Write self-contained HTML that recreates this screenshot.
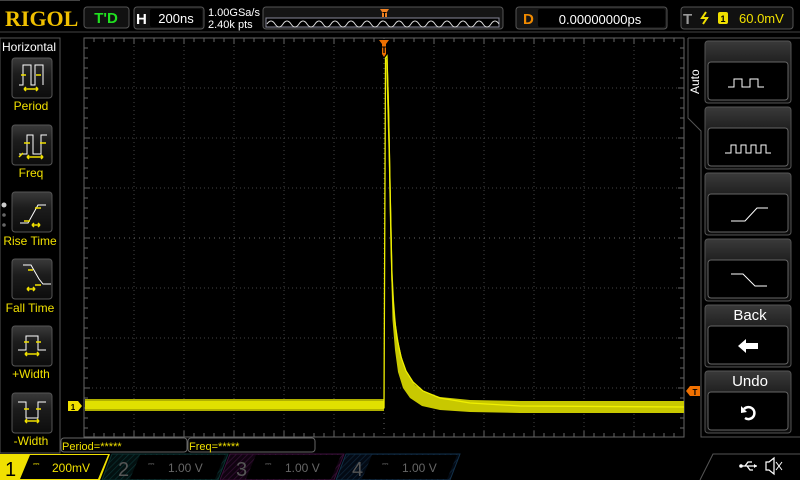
<!DOCTYPE html>
<html><head><style>
html,body{margin:0;padding:0;background:#000;width:800px;height:480px;overflow:hidden;font-family:"Liberation Sans",sans-serif}
svg{display:block}
</style></head><body>
<svg width="800" height="480" viewBox="0 0 800 480" xmlns="http://www.w3.org/2000/svg" font-family="Liberation Sans, sans-serif">
<defs>
<linearGradient id="btn" x1="0" y1="0" x2="0" y2="1"><stop offset="0" stop-color="#3a3a3a"/><stop offset="0.4" stop-color="#1c1c1c"/><stop offset="1" stop-color="#0c0c0c"/></linearGradient>
<pattern id="hatchG" width="4" height="4" patternUnits="userSpaceOnUse" patternTransform="rotate(45)"><rect width="4" height="4" fill="#031010"/><line x1="0" y1="0" x2="0" y2="4" stroke="#0b3030" stroke-width="1.5"/></pattern>
<pattern id="hatchM" width="4" height="4" patternUnits="userSpaceOnUse" patternTransform="rotate(45)"><rect width="4" height="4" fill="#100310"/><line x1="0" y1="0" x2="0" y2="4" stroke="#341034" stroke-width="1.5"/></pattern>
<pattern id="hatchB" width="4" height="4" patternUnits="userSpaceOnUse" patternTransform="rotate(45)"><rect width="4" height="4" fill="#030a14"/><line x1="0" y1="0" x2="0" y2="4" stroke="#0f2438" stroke-width="1.5"/></pattern>
</defs>
<rect width="800" height="480" fill="#000"/>
<line x1="0" y1="32" x2="800" y2="32" stroke="#444" stroke-width="1"/>
<line x1="0" y1="0.5" x2="80" y2="0.5" stroke="#444"/>
<text x="5" y="26" font-family="Liberation Serif, serif" font-weight="bold" font-size="22" fill="#f0c000">RIGOL</text>
<rect x="84" y="7" width="45" height="21" rx="3" fill="#111" stroke="#555"/>
<text x="106" y="23" font-size="15" font-weight="bold" fill="#20e020" text-anchor="middle">T'D</text>
<rect x="134" y="7" width="70" height="22" rx="3" fill="#111" stroke="#555"/>
<rect x="150" y="9" width="52" height="18" rx="2" fill="#000"/>
<text x="136" y="24" font-size="15" font-weight="bold" fill="#fff">H</text>
<text x="176" y="23" font-size="13" fill="#fff" text-anchor="middle">200ns</text>
<text x="208" y="16" font-size="11" fill="#fff">1.00GSa/s</text>
<text x="208" y="28" font-size="11" fill="#fff">2.40k pts</text>
<rect x="263" y="7" width="240" height="22" rx="3" fill="#151515" stroke="#555"/>
<rect x="266" y="18" width="233" height="9" fill="#000" stroke="#889"/>
<path d="M267 24 q4 -6 8 0 t8 0 t8 0 t8 0 t8 0 t8 0 t8 0 t8 0 t8 0 t8 0 t8 0 t8 0 t8 0 t8 0 t8 0 t8 0 t8 0 t8 0 t8 0 t8 0 t8 0 t8 0 t8 0 t8 0 t8 0 t8 0 t8 0 t8 0 t8 0" fill="none" stroke="#ddd" stroke-width="1"/>
<path d="M380 9 h9 l-2 3 v5 h-5 v-5 z" fill="#f08020"/>
<text x="384.5" y="17" font-size="7" font-weight="bold" fill="#000" text-anchor="middle">T</text>
<rect x="516" y="7" width="151" height="22" rx="3" fill="#151515" stroke="#555"/>
<rect x="538" y="9" width="127" height="18" rx="2" fill="#000"/>
<text x="523" y="24" font-size="15" font-weight="bold" fill="#f08a00">D</text>
<text x="600" y="24" font-size="13" fill="#fff" text-anchor="middle">0.00000000ps</text>
<rect x="681" y="7" width="112" height="22" rx="3" fill="#111" stroke="#555"/>
<text x="683" y="24" font-size="15" font-weight="bold" fill="#999">T</text>
<path d="M706 12 l-4 6 h5 l-4 6 M702 18 h6" stroke="#f0e000" stroke-width="2" fill="none"/>
<rect x="718" y="12" width="10" height="12" rx="2" fill="#f0e000"/>
<text x="723" y="22" font-size="9" font-weight="bold" fill="#000" text-anchor="middle">1</text>
<text x="739" y="23" font-size="13" fill="#f0e000">60.0mV</text>

<rect x="0" y="38" width="60" height="415" fill="none" stroke="#555"/>
<text x="2" y="51" font-size="12" fill="#fff">Horizontal</text>
<g fill="url(#btn)" stroke="#555">
<rect x="12" y="58" width="40" height="40" rx="3"/>
<rect x="12" y="125" width="40" height="40" rx="3"/>
<rect x="12" y="192" width="40" height="40" rx="3"/>
<rect x="12" y="259" width="40" height="40" rx="3"/>
<rect x="12" y="326" width="40" height="40" rx="3"/>
<rect x="12" y="393" width="40" height="40" rx="3"/>
</g>
<g fill="none" stroke="#fff" stroke-width="1">
<path d="M19 85 h4 v-20 h8 v20 h4 v-20 h8 v20"/>
<path d="M19 154 h8 v-19 h6 v19 h8 v-19 h6"/>
<path d="M20 223 h8 l10 -18 h8"/>
<path d="M23 265 h8 l8 14 l4 5 h8"/>
<path d="M18 350 h8 v-14 h12 v14 h8"/>
<path d="M18 402 h8 v16 h12 v-16 h8"/>
</g>
<g fill="none" stroke="#f0e000" stroke-width="1.5">
<path d="M21 75 h5 M36 75 h5 M24 89 h14 M24 89 l2 -2 M24 89 l2 2 M38 89 l-2 -2 M38 89 l-2 2"/>
<path d="M24 143 h6 M40 143 h6 M27 157 h16 M27 157 l2 -2 M27 157 l2 2 M43 157 l-2 -2 M43 157 l-2 2 M19 157 l4 -4"/>
<path d="M35 208 h6 M24 221 h6 M32 225 h8 M32 225 l2 -2 M32 225 l2 2 M40 225 l-2 -2 M40 225 l-2 2"/>
<path d="M28 270 h5 M35 285 h6 M27 289 h8 M27 289 l2 -2 M27 289 l2 2 M35 289 l-2 -2 M35 289 l-2 2"/>
<path d="M24 342 h5 M36 342 h5 M25 354 h14 M25 354 l2 -2 M25 354 l2 2 M39 354 l-2 -2 M39 354 l-2 2"/>
<path d="M24 409 h5 M36 409 h5 M25 421 h14 M25 421 l2 -2 M25 421 l2 2 M39 421 l-2 -2 M39 421 l-2 2"/>
</g>
<g font-size="12" fill="#f0e000" text-anchor="middle">
<text x="31" y="110">Period</text>
<text x="31" y="177">Freq</text>
<text x="30" y="245">Rise Time</text>
<text x="30" y="312">Fall Time</text>
<text x="31" y="378">+Width</text>
<text x="31" y="445">-Width</text>
</g>
<circle cx="4" cy="205" r="2.5" fill="#ccc"/><circle cx="4" cy="215" r="1.8" fill="#666"/><circle cx="4" cy="225" r="1.8" fill="#666"/>

<rect x="84" y="38" width="600" height="399" fill="#000" stroke="#666"/>
<g stroke="#444" stroke-dasharray="1 3">
<line x1="134" y1="38" x2="134" y2="437"/><line x1="184" y1="38" x2="184" y2="437"/><line x1="234" y1="38" x2="234" y2="437"/><line x1="284" y1="38" x2="284" y2="437"/><line x1="334" y1="38" x2="334" y2="437"/><line x1="434" y1="38" x2="434" y2="437"/><line x1="484" y1="38" x2="484" y2="437"/><line x1="534" y1="38" x2="534" y2="437"/><line x1="584" y1="38" x2="584" y2="437"/><line x1="634" y1="38" x2="634" y2="437"/>
<line x1="84" y1="88" x2="684" y2="88"/><line x1="84" y1="138" x2="684" y2="138"/><line x1="84" y1="188" x2="684" y2="188"/><line x1="84" y1="288" x2="684" y2="288"/><line x1="84" y1="338" x2="684" y2="338"/><line x1="84" y1="388" x2="684" y2="388"/>
</g>
<g stroke="#666">
<line x1="384" y1="38" x2="384" y2="437" stroke-dasharray="1 4"/>
<line x1="84" y1="238" x2="684" y2="238" stroke-dasharray="1 4"/>
</g>
<g stroke="#666">
<path d="M94 38v4M104 38v4M114 38v4M124 38v4M134 38v6M144 38v4M154 38v4M164 38v4M174 38v4M184 38v6M194 38v4M204 38v4M214 38v4M224 38v4M234 38v6M244 38v4M254 38v4M264 38v4M274 38v4M284 38v6M294 38v4M304 38v4M314 38v4M324 38v4M334 38v6M344 38v4M354 38v4M364 38v4M374 38v4M394 38v4M404 38v4M414 38v4M424 38v4M434 38v6M444 38v4M454 38v4M464 38v4M474 38v4M484 38v6M494 38v4M504 38v4M514 38v4M524 38v4M534 38v6M544 38v4M554 38v4M564 38v4M574 38v4M584 38v6M594 38v4M604 38v4M614 38v4M624 38v4M634 38v6M644 38v4M654 38v4M664 38v4M674 38v4"/>
<path d="M94 437v-4M104 437v-4M114 437v-4M124 437v-4M134 437v-6M144 437v-4M154 437v-4M164 437v-4M174 437v-4M184 437v-6M194 437v-4M204 437v-4M214 437v-4M224 437v-4M234 437v-6M244 437v-4M254 437v-4M264 437v-4M274 437v-4M284 437v-6M294 437v-4M304 437v-4M314 437v-4M324 437v-4M334 437v-6M344 437v-4M354 437v-4M364 437v-4M374 437v-4M394 437v-4M404 437v-4M414 437v-4M424 437v-4M434 437v-6M444 437v-4M454 437v-4M464 437v-4M474 437v-4M484 437v-6M494 437v-4M504 437v-4M514 437v-4M524 437v-4M534 437v-6M544 437v-4M554 437v-4M564 437v-4M574 437v-4M584 437v-6M594 437v-4M604 437v-4M614 437v-4M624 437v-4M634 437v-6M644 437v-4M654 437v-4M664 437v-4M674 437v-4"/>
<path d="M84 48h4M84 58h4M84 68h4M84 78h4M84 88h6M84 98h4M84 108h4M84 118h4M84 128h4M84 138h6M84 148h4M84 158h4M84 168h4M84 178h4M84 188h6M84 198h4M84 208h4M84 218h4M84 228h4M84 238h6M84 248h4M84 258h4M84 268h4M84 278h4M84 288h6M84 298h4M84 308h4M84 318h4M84 328h4M84 338h6M84 348h4M84 358h4M84 368h4M84 378h4M84 388h6M84 398h4M84 408h4M84 418h4M84 428h4"/>
<path d="M684 48h-4M684 58h-4M684 68h-4M684 78h-4M684 88h-6M684 98h-4M684 108h-4M684 118h-4M684 128h-4M684 138h-6M684 148h-4M684 158h-4M684 168h-4M684 178h-4M684 188h-6M684 198h-4M684 208h-4M684 218h-4M684 228h-4M684 238h-6M684 248h-4M684 258h-4M684 268h-4M684 278h-4M684 288h-6M684 298h-4M684 308h-4M684 318h-4M684 328h-4M684 338h-6M684 348h-4M684 358h-4M684 368h-4M684 378h-4M684 388h-6M684 398h-4M684 408h-4M684 418h-4M684 428h-4"/>
</g>

<!-- waveform -->
<rect x="85" y="399" width="299" height="12" fill="#b0b000"/>
<rect x="85" y="401" width="299" height="8" fill="#e0e000"/>
<path d="M386 60 L387.5 56 L389 100 L391 200 L392.5 270 L394 300 L396 325 L399 345 L403 362 L408 375 L415 385 L425 392 L440 397 L470 400 L520 401 L684 401 L684 413 L520 413 L470 412 L440 410 L422 406 L410 398 L403 388 L398 372 L395 350 L392.5 320 L390.5 250 L388.5 150 L386.5 80 Z" fill="#c8c800"/>
<path d="M384 408 L385.5 58 L387 56 L388.5 110 L390.5 210 L392 280 L394 315 L397 338 L401 357 L406 371 L413 382 L423 391 L440 398 L470 403 L520 406 L684 407" fill="none" stroke="#f0f000" stroke-width="1.3"/>
<!-- markers -->
<path d="M68 401 h10 l4 5 l-4 5 h-10 z" fill="#f0e000"/>
<text x="73" y="410" font-size="8" font-weight="bold" fill="#000" text-anchor="middle">1</text>
<path d="M379 40 h10 l-3 4 v10 l-2 3 l-2 -3 v-10 z" fill="#f07000"/>
<text x="384" y="53" font-size="9" font-weight="bold" fill="#000" text-anchor="middle">T</text>
<path d="M686 391 l4 -5 h10 v10 h-10 z" fill="#f07000"/>
<text x="695" y="395" font-size="8" font-weight="bold" fill="#000" text-anchor="middle">T</text>

<path d="M688 38 V118 L701 131 V437 H800" fill="none" stroke="#555"/>
<line x1="688" y1="38" x2="800" y2="38" stroke="#555"/>
<text transform="translate(699,94) rotate(-90)" font-size="12" fill="#fff">Auto</text>
<g fill="url(#btn)" stroke="#555">
<rect x="705" y="41" width="86" height="62" rx="3"/>
<rect x="705" y="107" width="86" height="62" rx="3"/>
<rect x="705" y="173" width="86" height="62" rx="3"/>
<rect x="705" y="239" width="86" height="62" rx="3"/>
<rect x="705" y="305" width="86" height="62" rx="3"/>
<rect x="705" y="371" width="86" height="62" rx="3"/>
</g>
<g fill="#000" stroke="#666">
<rect x="708" y="62" width="80" height="38" rx="3"/>
<rect x="708" y="128" width="80" height="38" rx="3"/>
<rect x="708" y="194" width="80" height="38" rx="3"/>
<rect x="708" y="260" width="80" height="38" rx="3"/>
<rect x="708" y="326" width="80" height="38" rx="3"/>
<rect x="708" y="392" width="80" height="38" rx="3"/>
</g>
<g fill="none" stroke="#fff" stroke-width="1">
<path d="M728 87 h6 v-8 h8 v8 h8 v-8 h8 v8 h6"/>
<path d="M725 153 h6 v-8 h5 v8 h5 v-8 h5 v8 h5 v-8 h5 v8 h5 v-8 h5 v8 h5"/>
<path d="M731 221 h14 l12 -13 h11"/>
<path d="M731 274 h12 l12 12 h12"/>
</g>
<text x="750" y="320" font-size="15" fill="#fff" text-anchor="middle">Back</text>
<path d="M738 346 l8 -7 v4 h12 v6 h-12 v4 z" fill="#fff"/>
<text x="750" y="386" font-size="15" fill="#fff" text-anchor="middle">Undo</text>
<path d="M744 409 a6 6 0 1 1 1 9" fill="none" stroke="#fff" stroke-width="2.5"/>
<path d="M741 406 l0 7 l6 -1 z" fill="#fff"/>

<rect x="61" y="438" width="126" height="14" rx="3" fill="#000" stroke="#666"/>
<text x="62" y="450" font-size="11" fill="#f0e000">Period=*****</text>
<rect x="188" y="438" width="127" height="14" rx="3" fill="#000" stroke="#666"/>
<text x="189" y="450" font-size="11" fill="#f0e000">Freq=*****</text>

<path d="M0 454 H110 L100 480 H0 Z" fill="#f0e000"/>
<text x="5" y="476" font-size="20" fill="#000">1</text>
<path d="M30 455 H108 L98 479 H20 Z" fill="#000"/>
<text x="33" y="466" font-size="8" fill="#f0e000">⎓</text>
<text x="52" y="472" font-size="12" fill="#f0e000">200mV</text>
<path d="M112 454 H228 L218 480 H102 Z" fill="url(#hatchG)" stroke="#0c3434"/>
<path d="M140 455 H225 L215 479 H130 Z" fill="#000"/>
<text x="118" y="476" font-size="20" fill="#555">2</text>
<text x="148" y="466" font-size="8" fill="#666">⎓</text>
<text x="168" y="472" font-size="12" fill="#666">1.00 V</text>
<path d="M230 454 H344 L334 480 H220 Z" fill="url(#hatchM)" stroke="#3a103a"/>
<path d="M256 455 H341 L331 479 H246 Z" fill="#000"/>
<text x="236" y="476" font-size="20" fill="#555">3</text>
<text x="265" y="466" font-size="8" fill="#666">⎓</text>
<text x="285" y="472" font-size="12" fill="#666">1.00 V</text>
<path d="M346 454 H460 L450 480 H336 Z" fill="url(#hatchB)" stroke="#12304a"/>
<path d="M372 455 H457 L447 479 H362 Z" fill="#000"/>
<text x="352" y="476" font-size="20" fill="#555">4</text>
<text x="382" y="466" font-size="8" fill="#666">⎓</text>
<text x="402" y="472" font-size="12" fill="#666">1.00 V</text>
<path d="M700 480 L713 454 H800" fill="none" stroke="#555"/>
<path d="M741 466 h16 M745 466 l3 -4 h4 M747 466 l3 4 h3" fill="none" stroke="#fff" stroke-width="1.3"/>
<circle cx="741" cy="466" r="1.8" fill="#fff"/>
<path d="M757 466 l-3 -2 v4 z" fill="#fff"/>
<path d="M766 462 h3 l5 -4 v16 l-5 -4 h-3 z" fill="none" stroke="#fff" stroke-width="1.2"/>
<path d="M776 462 l6 8 M782 462 l-6 8" stroke="#fff" stroke-width="1"/>
</svg>
</body></html>
